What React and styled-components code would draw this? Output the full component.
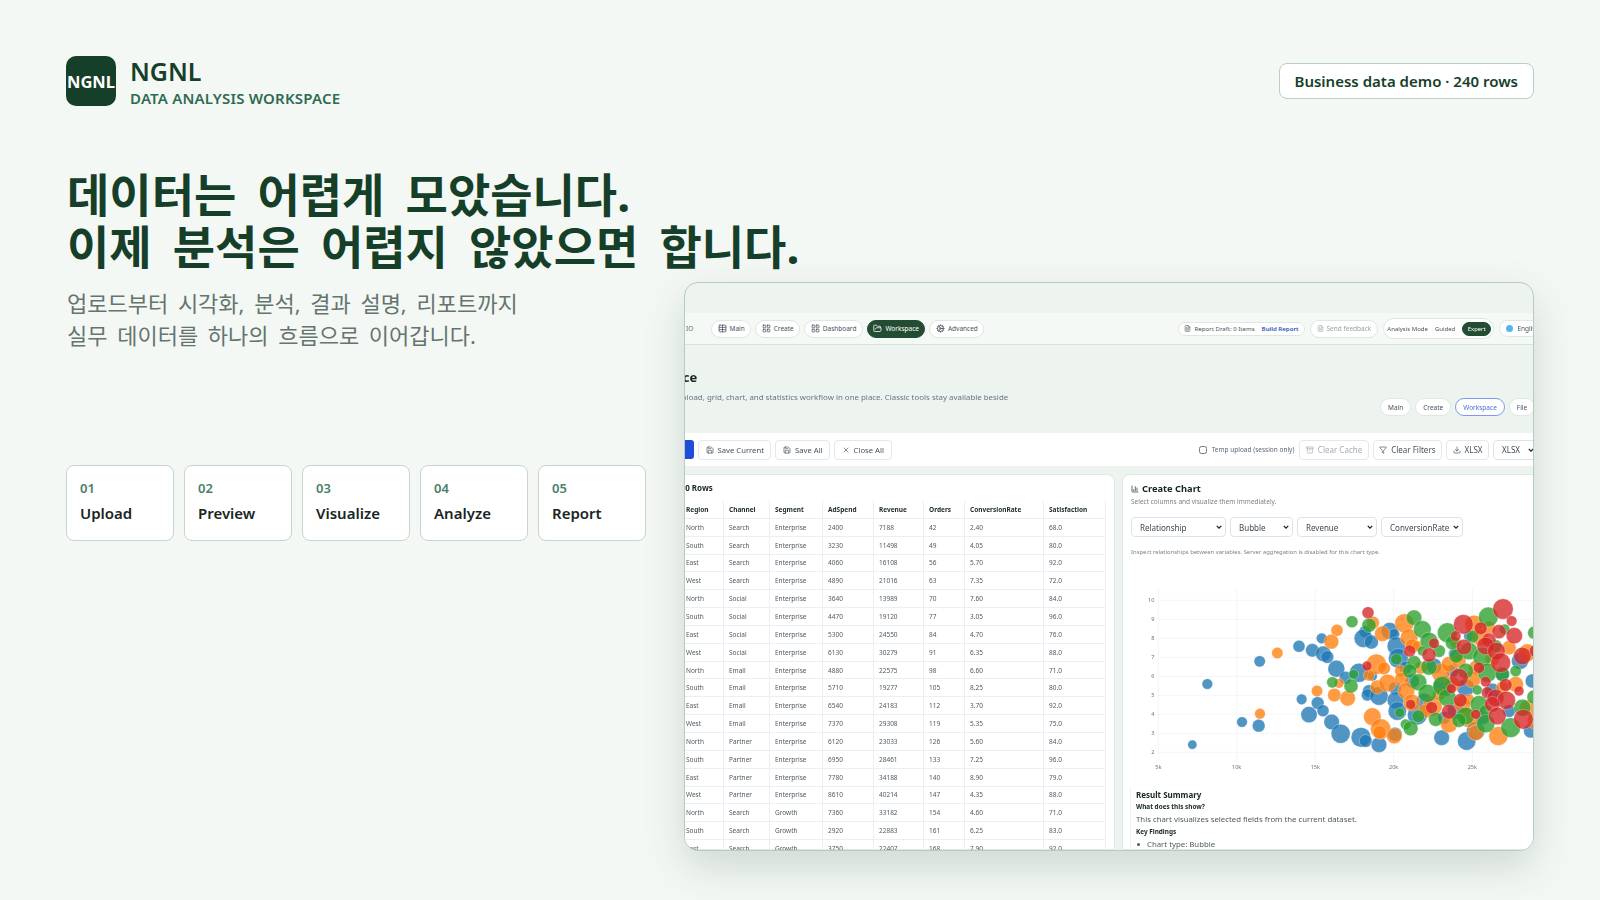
import React from 'react';
import styled, { createGlobalStyle } from 'styled-components';
import { Table, LayoutGrid, FolderOpen, Cog, FileText, Save, X, Archive, Filter, Download, ChartColumn } from 'lucide-react';

const GlobalStyle = createGlobalStyle`
  html, body {
    margin: 0;
    height: 900px;
    overflow: hidden;
    background: #f4f8f5;
    font-family: "Noto Sans", "Noto Sans CJK KR", sans-serif;
  }
  * { box-sizing: border-box; }
`

const Stage = styled.div`
  height: 900px;
  padding: 56px 66px 0;
`
const Header = styled.header`
  display: flex;
  justify-content: space-between;
  align-items: center;
  height: 50px;
`
const Brand = styled.div`
  display: flex;
  align-items: flex-start;
  gap: 14px;
  height: 50px;
`
const Logo = styled.div`
  width: 50px;
  height: 50px;
  border-radius: 10px;
  background: #163f2a;
  color: #fff;
  display: flex;
  align-items: center;
  justify-content: center;
  font-size: 16.5px;
  font-weight: 700;
  white-space: nowrap;
`
const BrandName = styled.div`
  font-size: 25px;
  line-height: 30px;
  font-weight: 600;
  color: #163f2a;
`
const BrandSub = styled.div`
  margin-top: 2px;
  font-size: 15px;
  line-height: 20px;
  font-weight: 600;
  letter-spacing: .2px;
  color: #2f6b52;
`
const Badge = styled.div`
  height: 36px;
  padding: 0 15px;
  display: flex;
  align-items: center;
  background: #fff;
  border: 1px solid #b9cfc2;
  border-radius: 8px;
  font-size: 15px;
  font-weight: 600;
  color: #163f2a;
`
const Headline = styled.h1`
  margin: 62px 0 0 1px;
  font-size: 46px;
  line-height: 52px;
  font-weight: 700;
  word-spacing: .2em;
  color: #163f2a;
  white-space: nowrap;
`
const Columns = styled.div`
  display: flex;
  justify-content: space-between;
  margin-top: 10px;
`
const Intro = styled.div`
  width: 580px;
  padding-top: 5px;
`
const Lead = styled.p`
  margin: 0 0 0 1px;
  font-size: 22px;
  line-height: 32px;
  word-spacing: .18em;
  color: #65756d;
`
const Steps = styled.div`
  display: grid;
  grid-template-columns: repeat(5, 1fr);
  gap: 10px;
  margin-top: 114px;
`
const Step = styled.div`
  height: 76px;
  padding: 12px 13px;
  background: #fff;
  border: 1px solid #c6d6cd;
  border-radius: 8px;
`
const StepNum = styled.div`
  font-size: 13px;
  line-height: 20px;
  font-weight: 600;
  color: #4b8068;
`
const StepName = styled.div`
  margin-top: 3px;
  font-size: 15px;
  line-height: 24px;
  font-weight: 600;
  color: #18261f;
`

/* the product shot, cropped on both sides */
const Shot = styled.div`
  width: 850px;
  height: 569px;
  display: flex;
  flex-direction: column;
  overflow: hidden;
  background: #edf3ee;
  border: 1px solid #b9cbbf;
  border-radius: 14px;
  box-shadow: 0 16px 42px rgba(22, 64, 42, .17);
`
const ShotInner = styled.div`
  display: flex;
  flex-direction: column;
  height: 100%;
  filter: blur(.35px);
`
const TopBand = styled.div`
  flex: none;
  height: 30px;
`
const NavBar = styled.div`
  flex: none;
  height: 32px;
  margin-right: -13px;
  padding-left: 1px;
  display: flex;
  align-items: center;
  background: #f4f9f5;
  border-bottom: 1px solid #d6e2da;
  font-size: 6.5px;
  color: #5d6873;
`
const Clip = styled.span`
  width: 25px;
`
const Pills = styled.div`
  display: flex;
  align-items: center;
  gap: ${({ $gap }) => $gap || 4}px;
  margin-left: ${({ $push }) => ($push ? 'auto' : '0')};
`
const Pill = styled.div`
  height: ${({ $h }) => $h || 18}px;
  padding: 0 ${({ $pad }) => $pad || 5.5}px;
  display: flex;
  align-items: center;
  gap: ${({ $gap }) => $gap || 3}px;
  background: ${({ $dark }) => ($dark ? '#234d33' : '#fff')};
  color: ${({ $dark, $muted, $blue }) => ($dark ? '#fff' : $blue ? '#4f6fd6' : $muted ? '#9aa4a0' : '#47535c')};
  border: 1px solid ${({ $dark, $blue }) => ($dark ? '#234d33' : $blue ? '#7c9bf0' : '#dfe7e2')};
  border-radius: 999px;
  font-size: ${({ $size }) => $size || 6.5}px;
  white-space: nowrap;
`
const BuildLink = styled.span`
  margin-left: 4px;
  color: #2a55b8;
  font-weight: 600;
`
const Globe = styled.span`
  width: 7px;
  height: 7px;
  border-radius: 50%;
  background: #58b4ee;
`
const ShotHead = styled.div`
  flex: none;
  height: 88px;
  padding-top: 22px;
`
const ShotTitle = styled.div`
  margin-left: -59px;
  font-size: 13px;
  line-height: 20px;
  font-weight: 700;
  color: #18261f;
`
const ShotDesc = styled.div`
  margin: 5px 0 0 -9px;
  font-size: 7.9px;
  line-height: 10px;
  color: #6b7580;
  white-space: nowrap;
`
const SubNav = styled.div`
  display: flex;
  gap: 4px;
  margin: -4px -30px 0 695px;
`
const Toolbar = styled.div`
  flex: none;
  height: 33px;
  margin-right: -5px;
  display: flex;
  align-items: center;
  gap: 4px;
  background: #fff;
`
const BlueBtn = styled.div`
  width: 22px;
  height: 19px;
  margin-left: -13px;
  border-radius: 3px;
  background: #1d4ed8;
`
const Btn = styled.div`
  height: 20px;
  padding: 0 ${({ $pad }) => $pad || 5.5}px;
  display: flex;
  align-items: center;
  gap: 4px;
  border: 1px solid #e3e8ee;
  border-radius: 4px;
  font-size: ${({ $size }) => $size || 8}px;
  color: ${({ $muted }) => ($muted ? '#a5aeb5' : '#47535c')};
  white-space: nowrap;
`
const Temp = styled.label`
  margin-left: auto;
  margin-right: 1px;
  display: flex;
  align-items: center;
  gap: 5px;
  font-size: 6.5px;
  color: #5d6873;
  white-space: nowrap;
`
const Check = styled.input`
  width: 8px;
  height: 8px;
  margin: 0;
`
const chevron = `url("data:image/svg+xml,%3Csvg xmlns='http://www.w3.org/2000/svg' viewBox='0 0 8 5'%3E%3Cpath d='M1 1l3 3 3-3' fill='none' stroke='%23222' stroke-width='1.7'/%3E%3C/svg%3E")`;
const Select = styled.select`
  appearance: none;
  width: ${({ $w }) => $w}px;
  height: 20px;
  padding: 0 0 0 8px;
  background: #fff ${chevron} no-repeat right 3px center / 6px 4px;
  border: 1px solid #dde3ea;
  border-radius: 4px;
  font: 8px "Noto Sans", sans-serif;
  color: #3f4a52;
`
const Panels = styled.div`
  flex: 1;
  min-height: 0;
  margin: 8px 0 0 -10px;
  display: flex;
  gap: 7px;
`
const TablePanel = styled.section`
  flex: none;
  width: 440px;
  background: #fff;
  border: 1px solid #e0e8e3;
  border-radius: 0 8px 0 0;
`
const PanelLabel = styled.div`
  height: 26px;
  padding-top: 7px;
  font-size: 8px;
  line-height: 12px;
  font-weight: 700;
  color: #18261f;
`
const DataRow = styled.div`
  display: grid;
  grid-template-columns: 43px 46px 53px 51px 50px 41px 79px 62px;
  width: 425px;
  height: 17.85px;
  margin-left: 5px;
  border-bottom: 1px solid #ebeef2;
  font-size: 6.5px;
  font-weight: ${({ $head }) => ($head ? 700 : 400)};
  color: ${({ $head }) => ($head ? '#1f2a24' : '#4f5a60')};
`
const DataCell = styled.div`
  display: flex;
  align-items: center;
  padding-left: 5px;
  border-right: 1px solid #ebeef2;
  white-space: nowrap;
`
const ChartPanel = styled.section`
  flex: none;
  width: 440px;
  padding: 7px 0 0 8px;
  background: #fff;
  border: 1px solid #e0e8e3;
  border-radius: 8px 0 0 0;
`
const ChartTitle = styled.div`
  display: flex;
  align-items: center;
  gap: 3px;
  height: 13px;
  font-size: 9.3px;
  font-weight: 700;
  color: #18261f;
`
const ChartSub = styled.div`
  margin-top: 2px;
  font-size: 6.5px;
  line-height: 10px;
  color: #7a848c;
`
const Selects = styled.div`
  display: flex;
  gap: 4px;
  margin-top: 10px;
`
const Caption = styled.div`
  margin-top: 11px;
  font-size: 5.9px;
  line-height: 8px;
  color: #7a848c;
  white-space: nowrap;
`
const ChartBox = styled.svg`
  display: block;
  width: 420px;
  height: 217px;
  margin: 15px 0 0 -12px;
`
const AxisLabel = styled.text`
  font: 5.6px "Noto Sans", sans-serif;
  fill: #6d7478;
`
const Summary = styled.div`
  margin-left: -1px;
  padding: 1px 0 0 5px;
  border-left: 1px solid #eef0f2;
  color: #4f5a60;
`
const SummaryHead = styled.div`
  font-size: 8px;
  line-height: 12px;
  font-weight: 700;
  color: #18261f;
`
const SummaryKey = styled.div`
  font-size: 6.4px;
  line-height: 12px;
  font-weight: 700;
  color: #18261f;
`
const SummaryText = styled.div`
  font-size: 7.8px;
  line-height: 13px;
`
const SummaryItem = styled.div`
  display: flex;
  align-items: center;
  gap: 7px;
  margin-left: 1px;
  font-size: 7.8px;
  line-height: 13px;
  &::before {
    content: '';
    width: 3px;
    height: 3px;
    border-radius: 50%;
    background: #4f5a60;
  }
`

const steps = ['Upload', 'Preview', 'Visualize', 'Analyze', 'Report'];

const columns = ['Region', 'Channel', 'Segment', 'AdSpend', 'Revenue', 'Orders', 'ConversionRate', 'Satisfaction'];
const rows = [
  'North Search Enterprise 2400 7188 42 2.40 68.0',
  'South Search Enterprise 3230 11498 49 4.05 80.0',
  'East Search Enterprise 4060 16108 56 5.70 92.0',
  'West Search Enterprise 4890 21016 63 7.35 72.0',
  'North Social Enterprise 3640 13989 70 7.60 84.0',
  'South Social Enterprise 4470 19120 77 3.05 96.0',
  'East Social Enterprise 5300 24550 84 4.70 76.0',
  'West Social Enterprise 6130 30279 91 6.35 88.0',
  'North Email Enterprise 4880 22575 98 6.60 71.0',
  'South Email Enterprise 5710 19277 105 8.25 80.0',
  'East Email Enterprise 6540 24183 112 3.70 92.0',
  'West Email Enterprise 7370 29308 119 5.35 75.0',
  'North Partner Enterprise 6120 23033 126 5.60 84.0',
  'South Partner Enterprise 6950 28461 133 7.25 96.0',
  'East Partner Enterprise 7780 34188 140 8.90 79.0',
  'West Partner Enterprise 8610 40214 147 4.35 88.0',
  'North Search Growth 7360 33182 154 4.60 71.0',
  'South Search Growth 2920 22883 161 6.25 83.0',
  'East Search Growth 3750 22407 168 7.90 92.0',
  'West Search Growth 4580 27910 175 3.55 74.0',
];

// x, y, r read off the chart at 3x
const bubbles = [
  ['#1f77b4', [[220,521,13],[265,339,15],[369,453,15],[419,464,18],[422,271,16],[540,226,17],[580,238,19],[608,202,15],[613,248,22],[625,258,18],[548,385,15],[596,396,18],[612,419,17],[570,431,23],[638,453,22],[665,488,27],[652,293,24],[680,320,18],[720,305,27],[760,315,14],[738,182,17],[733,202,26],[757,213,20],[812,180,24],[825,190,16],[832,225,26],[838,262,28],[750,360,18],[745,372,17],[780,375,26],[828,352,18],[830,388,24],[835,420,26],[726,499,28],[740,510,18],[780,521,22],[828,490,20],[895,432,28],[968,500,22],[1043,510,26],[1070,480,26],[975,345,30],[1040,350,25],[1010,250,20],[945,285,22],[1050,195,15],[1203,270,24],[1235,480,20],[975,440,18],[880,330,20],[915,390,22],[1000,300,18],[1120,360,22],[1150,310,20],[1010,420,24],[1090,440,20],[1170,420,18],[1240,330,20],[860,290,18]]],
  ['#ff7f0e', [[475,246,16],[654,178,17],[637,212,21],[762,155,18],[790,188,22],[856,157,27],[870,200,25],[880,225,20],[895,225,15],[772,280,29],[795,292,18],[750,313,16],[660,337,14],[594,360,16],[646,372,19],[686,382,22],[423,428,15],[775,348,20],[806,336,25],[845,300,17],[848,325,20],[862,360,24],[878,395,24],[760,437,25],[785,474,29],[782,484,19],[826,495,22],[940,405,28],[965,305,26],[990,280,22],[1020,270,20],[1065,160,26],[1085,200,24],[1070,290,20],[1060,325,24],[1050,385,15],[1050,440,28],[990,460,24],[1070,485,22],[1138,495,27],[1225,245,25],[1225,410,22],[905,290,18],[1000,340,22],[1030,400,24],[1120,265,20],[1150,350,18],[1190,340,22],[960,370,18],[920,420,20],[1110,170,18],[1170,230,20],[1250,450,24],[1010,215,16]]],
  ['#2ca02c', [[699,152,17],[750,163,20],[885,140,22],[910,175,25],[930,210,25],[985,185,28],[1000,215,20],[1060,197,18],[1108,138,28],[1157,175,15],[1245,185,18],[1050,240,25],[1090,258,27],[1105,305,27],[1012,255,20],[930,288,23],[885,275,20],[872,300,20],[910,240,14],[832,265,16],[704,310,14],[640,334,16],[696,345,20],[898,334,24],[925,367,26],[970,345,27],[985,380,25],[1075,357,14],[1080,400,25],[1100,420,18],[1100,458,26],[1040,435,25],[1020,448,20],[1175,470,28],[1245,378,20],[860,460,15],[875,472,21],[898,436,18],[842,425,14],[1040,300,22],[960,240,18],[1150,310,20],[1190,300,16],[1210,410,24],[1130,225,18],[950,445,20]]],
  ['#d62728', [[747,125,17],[1152,114,29],[1178,150,15],[1033,160,28],[1085,172,18],[1010,195,15],[1140,182,20],[1186,194,23],[1110,207,20],[1100,225,25],[1132,240,25],[1145,275,28],[1035,228,22],[945,217,15],[930,252,20],[872,240,17],[1210,255,25],[744,285,14],[1020,320,26],[1100,332,15],[1160,342,18],[1105,365,17],[997,353,14],[1130,380,24],[1162,388,26],[1120,400,22],[1024,388,19],[875,400,14],[938,410,17],[990,422,21],[1135,435,25],[1213,445,28],[1080,290,16],[1200,360,14],[1070,430,14],[1250,240,18]]],
];
const xTicks = [[118, '5k'], [353, '10k'], [589, '15k'], [824, '20k'], [1060, '25k']];
const yTicks = [[88, 10], [145, 9], [202, 8], [259, 7], [316, 6], [373, 5], [430, 4], [487, 3], [544, 2]];

const BubbleChart = () => (
  <ChartBox viewBox="0 0 1260 651">
    {xTicks.map(([x]) => <line key={x} x1={x} x2={x} y1={55} y2={575} stroke="#eef0f1" strokeWidth="2" />)}
    {yTicks.map(([y]) => <line key={y} x1={118} x2={1260} y1={y} y2={y} stroke="#eef0f1" strokeWidth="2" />)}
    {bubbles.map(([color, dots]) => dots.map(([x, y, r], i) => (
      <circle key={color + i} cx={x} cy={y} r={r * 1.06} fill={color} fillOpacity=".78" stroke="#fff" strokeOpacity=".6" strokeWidth="1.5" />
    )))}
    <g transform="scale(3)">
      {xTicks.map(([x, t]) => <AxisLabel key={t} x={x / 3} y={198} textAnchor="middle">{t}</AxisLabel>)}
      {yTicks.map(([y, t]) => <AxisLabel key={t} x={35.5} y={y / 3 + 2} textAnchor="end">{t}</AxisLabel>)}
    </g>
  </ChartBox>
);

const ProductShot = () => (
  <Shot>
    <ShotInner>
      <TopBand />
      <NavBar>
        <Clip>IO</Clip>
        <Pills>
          <Pill><Table size={9} />Main</Pill>
          <Pill><LayoutGrid size={9} />Create</Pill>
          <Pill><LayoutGrid size={9} />Dashboard</Pill>
          <Pill $dark><FolderOpen size={9} />Workspace</Pill>
          <Pill><Cog size={9} />Advanced</Pill>
        </Pills>
        <Pills $push $gap={5}>
          <Pill $h={14} $size={6.1}><FileText size={7} />Report Draft: 0 Items<BuildLink>Build Report</BuildLink></Pill>
          <Pill $muted><FileText size={7} />Send feedback</Pill>
          <Pill $h={21} $pad={2} $gap={7} $size={6}>&nbsp;Analysis Mode<span>Guided</span><Pill $dark $h={14} $size={5.9} $pad={4.5}>Expert</Pill></Pill>
          <Pill $h={17}><Globe />&nbsp;English</Pill>
        </Pills>
      </NavBar>
      <ShotHead>
        <ShotTitle>Workspace</ShotTitle>
        <ShotDesc>Upload, grid, chart, and statistics workflow in one place. Classic tools stay available beside</ShotDesc>
        <SubNav>
          <Pill $pad={7}>Main</Pill>
          <Pill $pad={7}>Create</Pill>
          <Pill $pad={7} $blue>Workspace</Pill>
          <Pill $pad={7}>File</Pill>
        </SubNav>
      </ShotHead>
      <Toolbar>
        <BlueBtn />
        <Btn $pad={6.5} $size={7.7}><Save size={8} />Save Current</Btn>
        <Btn $pad={6.5} $size={7.7}><Save size={8} />Save All</Btn>
        <Btn $pad={6.5} $size={7.7}><X size={8} />Close All</Btn>
        <Temp><Check type="checkbox" />Temp upload (session only)</Temp>
        <Btn $muted><Archive size={8} />Clear Cache</Btn>
        <Btn><Filter size={8} />Clear Filters</Btn>
        <Btn><Download size={8} />XLSX</Btn>
        <Select $w={45} defaultValue="XLSX"><option>XLSX</option></Select>
      </Toolbar>
      <Panels>
        <TablePanel>
          <PanelLabel>240 Rows</PanelLabel>
          <DataRow $head>{columns.map((c) => <DataCell key={c}>{c}</DataCell>)}</DataRow>
          {rows.map((row) => (
            <DataRow key={row}>
              {row.split(' ').map((v, i) => <DataCell key={i}>{v}</DataCell>)}
            </DataRow>
          ))}
        </TablePanel>
        <ChartPanel>
          <ChartTitle><ChartColumn size={8} />Create Chart</ChartTitle>
          <ChartSub>Select columns and visualize them immediately.</ChartSub>
          <Selects>
            <Select $w={95}><option>Relationship</option></Select>
            <Select $w={63}><option>Bubble</option></Select>
            <Select $w={80}><option>Revenue</option></Select>
            <Select $w={82}><option>ConversionRate</option></Select>
          </Selects>
          <Caption>Inspect relationships between variables. Server aggregation is disabled for this chart type.</Caption>
          <BubbleChart />
          <Summary>
            <SummaryHead>Result Summary</SummaryHead>
            <SummaryKey>What does this show?</SummaryKey>
            <SummaryText>This chart visualizes selected fields from the current dataset.</SummaryText>
            <SummaryKey>Key Findings</SummaryKey>
            <SummaryItem>Chart type: Bubble</SummaryItem>
          </Summary>
        </ChartPanel>
      </Panels>
    </ShotInner>
  </Shot>
);

const App = () => (
  <Stage>
    <GlobalStyle />
    <Header>
      <Brand>
        <Logo>NGNL</Logo>
        <div>
          <BrandName>NGNL</BrandName>
          <BrandSub>DATA ANALYSIS WORKSPACE</BrandSub>
        </div>
      </Brand>
      <Badge>Business data demo · 240 rows</Badge>
    </Header>
    <Headline>
      데이터는 어렵게 모았습니다.<br />
      이제 분석은 어렵지 않았으면 합니다.
    </Headline>
    <Columns>
      <Intro>
        <Lead>
          업로드부터 시각화, 분석, 결과 설명, 리포트까지<br />
          실무 데이터를 하나의 흐름으로 이어갑니다.
        </Lead>
        <Steps>
          {steps.map((name, i) => (
            <Step key={name}>
              <StepNum>0{i + 1}</StepNum>
              <StepName>{name}</StepName>
            </Step>
          ))}
        </Steps>
      </Intro>
      <ProductShot />
    </Columns>
  </Stage>
);

export default App;
